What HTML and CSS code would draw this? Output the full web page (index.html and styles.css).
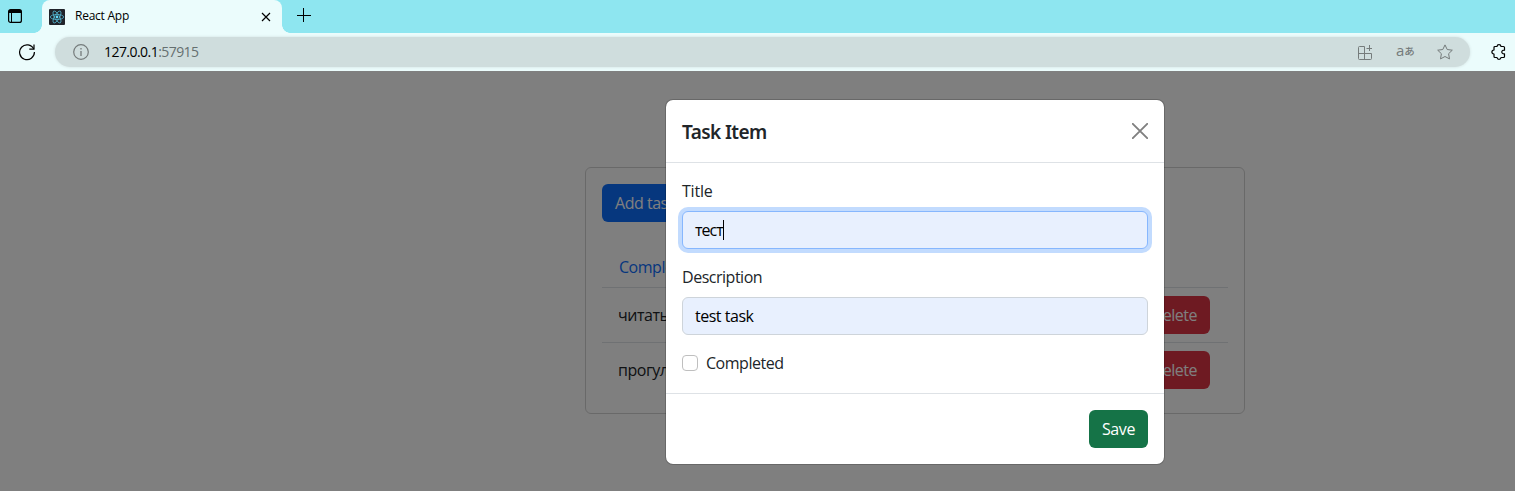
FILE: index.html
```
<!DOCTYPE html>
<html lang="en">
<head>
<meta charset="utf-8">
<title>React App</title>
<link rel="stylesheet" href="styles.css">
</head>
<body>
<div class="tabbar">
  <svg class="workspace" width="14" height="14" viewBox="0 0 14 14"><rect x=".6" y=".6" width="12.8" height="12.8" rx="2" fill="none" stroke="#000" stroke-width="1.2"/><path d="M1 1h12v3H1z"/><path d="M3.500 4v9" stroke="#000"/></svg>
  <div class="tab">
    <svg class="favicon" width="16" height="16" viewBox="0 0 16 16"><rect width="16" height="16" rx="1" fill="#20232a"/><g fill="none" stroke="#53b5d0" stroke-width=".8"><ellipse cx="8" cy="8" rx="6.7" ry="2.5"/><ellipse cx="8" cy="8" rx="6.7" ry="2.5" transform="rotate(60 8 8)"/><ellipse cx="8" cy="8" rx="6.7" ry="2.5" transform="rotate(120 8 8)"/></g><circle cx="8" cy="8" r="1.4" fill="#61dafb"/></svg>
    <span class="tab-title">React App</span>
    <svg class="tab-close" width="10" height="10" viewBox="0 0 10 10"><path d="M1 1l8 8M9 1L1 9" stroke="#000" stroke-width="1.2"/></svg>
  </div>
  <svg class="newtab" width="14" height="14" viewBox="0 0 14 14"><path d="M6.5 0v14M0 7.5h14" stroke="#000"/></svg>
</div>
<div class="toolbar">
  <svg class="reload" width="18" height="18" viewBox="0 0 18 18" fill="none" stroke="#000" stroke-width="1.2"><path d="M15.7 6.1A7.4 7.4 0 1 0 16.4 9"/><path d="M16 1.6v4.6h-4.7"/></svg>
  <div class="address">
    <svg class="info" width="16" height="16" viewBox="0 0 16 16"><circle cx="8" cy="8" r="7.3" fill="none" stroke="#757b7b" stroke-width="1.2"/><path d="M8 7v5M8 4v1.4" stroke="#757b7b" stroke-width="1.3"/></svg>
    <span class="url">127.0.0.1<span class="port">:57915</span></span>
    <svg class="apps" width="15" height="15" viewBox="0 0 15 15" fill="none" stroke="#757b7b"><path d="M7.500 1.500H2.500a1 1 0 0 0-1 1V13.500a1 1 0 0 0 1 1h11a1 1 0 0 0 1-1V8.500H1.500M7.500 1.500v13M12.500 0v6M9.500 3.500h5.500"/></svg>
    <span class="translate">a<span class="kana">あ</span></span>
    <svg class="star" width="16" height="16" viewBox="0 0 16 16"><path d="M8 .9l2.200 4.600 5.100.7-3.700 3.500.9 5.200L8 12.500l-4.500 2.400.9-5.200L.7 6.200l5.100-.7z" fill="none" stroke="#757b7b" stroke-linejoin="round"/></svg>
  </div>
  <svg class="puzzle" width="15" height="16" viewBox="0 0 15 16"><path d="M4 2.500h2c.2-2.400 3.800-2.400 4 0h2.500a1 1 0 0 1 1 1v2.700c-3.600-.4-3.600 4 0 3.600v2.700a1 1 0 0 1-1 1H10c-.2 2.400-3.800 2.400-4 0H4a1 1 0 0 1-1-1V10C.2 9.800.2 6.200 3 6V3.500a1 1 0 0 1 1-1z" fill="none" stroke="#000" stroke-width="1.200" stroke-linejoin="round"/></svg>
</div>
<main class="viewport">
  <section class="card">
    <button class="btn primary">Add task</button>
    <nav class="nav">Completed</nav>
    <div class="row"><span>читать</span><button class="btn danger">Delete</button></div>
    <div class="row"><span>прогулка</span><button class="btn danger">Delete</button></div>
  </section>
  <div class="backdrop">
    <form class="modal">
      <header class="modal-header">
        <h5 class="modal-title">Task Item</h5>
        <svg width="16" height="16" viewBox="0 0 16 16"><path d="M.8.8l14.400 14.400M15.200.8L.8 15.200" stroke="#808080" stroke-width="1.900" stroke-linecap="round"/></svg>
      </header>
      <div class="modal-body">
        <div class="label title-label">Title</div>
        <div class="input focused"><span class="cyr">тест</span><i class="caret"></i></div>
        <div class="label desc-label">Description</div>
        <div class="input"><span class="value">test task</span></div>
        <div class="check"><span class="box"></span><span class="check-label">Completed</span></div>
      </div>
      <footer class="modal-footer"><button type="button" class="btn success">Save</button></footer>
    </form>
  </div>
</main>
</body>
</html>
```
FILE: styles.css
```
* { box-sizing: border-box; }
body { margin: 0; height: 491px; overflow: hidden; display: flex; flex-direction: column; font: 16px/24px "Open Sans", "Noto Sans", sans-serif; letter-spacing: -.48px; color: #212529; background: #fff; }
svg { display: block; flex: none; }
.tabbar { height: 33px; flex: none; display: flex; background: #8ee6f0; }
.workspace { margin: 9px 20px 0 8px; }
.tab { position: relative; width: 240px; height: 33px; padding: 0 11px 0 7px; display: flex; align-items: center; background: #ebfcfc; border-radius: 8px 8px 0 0; }
.tab::before, .tab::after { content: ""; position: absolute; bottom: 0; width: 8px; height: 8px; }
.tab::before { left: -8px; background: radial-gradient(circle at 0 0, transparent 7.500px, #ebfcfc 8px); }
.tab::after { right: -8px; background: radial-gradient(circle at 100% 0, transparent 7.500px, #ebfcfc 8px); }
.tab-title { margin: -2px 0 0 10px; flex: 1; font-size: 12px; letter-spacing: -.25px; color: #000; }
.newtab { margin: 8px 0 0 15px; }
.toolbar { height: 38px; flex: none; display: flex; align-items: center; background: #ebfcfc; }
.reload { margin: 0 19px 0 18px; }
.address { width: 1415px; height: 30px; border-radius: 15px; padding: 0 17px 0 18px; display: flex; align-items: center; background: #cfdddd; box-shadow: 0 0 3px #cfdddd; }
.url { margin-left: 15px; flex: 1; font-size: 14px; letter-spacing: -.55px; color: #000; }
.port { color: #667070; }
.translate { margin: -2px 23px 0 24px; width: 18px; font-size: 15px; line-height: 20px; display: flex; color: #757b7b; letter-spacing: 0; }
.kana { font: 500 10.500px/22px "Noto Sans CJK JP", sans-serif; }
.puzzle { margin-left: 21px; }
.viewport { position: relative; flex: 1; padding: 96px 270px 0 585px; }
.card { width: 660px; height: 247px; border: 1px solid #d3d3d3; border-radius: 6px; padding: 16px; }
.btn { display: block; height: 38px; border: 0; border-radius: 6px; padding: 0 13px; font: inherit; letter-spacing: inherit; color: #fff; }
.primary { background: #0d6efd; }
.danger { background: #dc3545; }
.success { width: 59px; background: #157347; letter-spacing: -.4px; font-weight: 500; }
.nav { height: 42px; margin-top: 24px; padding: 9px 17px; color: #0d6efd; }
.nav, .row { border-bottom: 1px solid #dee2e6; }
.row { height: 55px; padding: 8px 18px 8px 16px; display: flex; align-items: center; justify-content: space-between; }
.row:last-child { height: 54px; border: 0; }
.backdrop { position: absolute; inset: 0; padding: 28px 0 0 665px; background: rgba(0,0,0,.5); }
.modal { width: 500px; height: 366px; border: 1px solid rgba(0,0,0,.175); border-radius: 8px; background: #fff; background-clip: padding-box; }
.modal-header { height: 63px; padding: 16px; display: flex; justify-content: space-between; align-items: center; border-bottom: 1px solid #dee2e6; }
.modal-title { margin: 2px 0 0; font: 600 19px/30px "Noto Sans", "Open Sans", sans-serif; letter-spacing: -.6px; }
.modal-body { height: 230px; padding: 16px; }
.label { margin-bottom: 8px; }
.title-label { letter-spacing: -.2px; }
.cyr { letter-spacing: -.95px; }
.input { height: 38px; margin-bottom: 16px; padding: 0 12px; border: 1px solid #ced4da; border-radius: 6px; display: flex; align-items: center; background: #e8f0fe; color: #000; }
.focused { border-color: #86b7fe; box-shadow: 0 0 0 4px #c2dbfe; }
.caret { width: 1px; height: 20px; background: #000; }
.check { display: flex; align-items: center; gap: 8px; }
.box { width: 16px; height: 16px; border: 1px solid #bfbfbf; border-radius: 4px; }
.modal-footer { padding: 16px; display: flex; justify-content: flex-end; border-top: 1px solid #dee2e6; }
```
